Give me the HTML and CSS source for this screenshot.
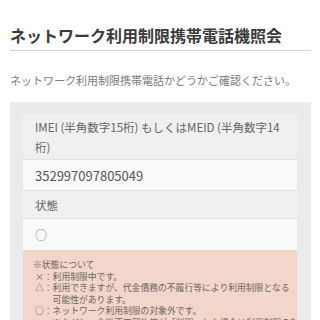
FILE: index.html
```html
<!DOCTYPE html>
<html lang="ja">
<head>
<meta charset="utf-8">
<link rel="stylesheet" href="styles.css">
</head>
<body>
<h1 class="title">ネットワーク利用制限携帯電話機照会</h1>
<p class="lead">ネットワーク利用制限携帯電話かどうかご確認ください。</p>
<div class="panel">
  <div class="card">
    <div class="row label">IMEI (半角数字15桁) もしくはMEID (半角数字14桁)</div>
    <div class="row value num">352997097805049</div>
    <div class="row label short">状態</div>
    <div class="row value status"><span class="mark">○</span></div>
    <div class="note">
      <div class="note-head">※状態について</div>
      <div class="note-item"><span class="key">×：</span><span>利用制限中です。</span></div>
      <div class="note-item"><span class="key">△：</span><span>利用できますが、代金債務の不履行等により利用制限となる<br>可能性があります。</span></div>
      <div class="note-item"><span class="key">○：</span><span>ネットワーク利用制限の対象外です。<br>※ただし、今後不正契約等が「判明」した場合は利用制限の対象と<br>なります。</span></div>
    </div>
  </div>
</div>
</body>
</html>
```
FILE: styles.css
```css
html, body {
  margin: 0;
  background: #ffffff;
}
body {
  padding: 0 9px 0 10px;
  font-family: "Noto Sans CJK JP", "Noto Sans", sans-serif;
  color: #555;
}
.title {
  margin: 23px 0 0;
  padding-bottom: 3px;
  font-size: 16px;
  line-height: 24px;
  font-weight: 700;
  color: #3a3a3a;
  border-bottom: 1px solid #d4d4d4;
}
.lead {
  margin: 21px 0 0;
  font-size: 11px;
  line-height: 16px;
  color: #7a7a7a;
}
.panel {
  margin-top: 14px;
  background: #ebebeb;
  padding: 12px 14px 0 13px;
}
.card {
  display: flex;
  flex-direction: column;
}
.row {
  padding: 0 12px;
  border-bottom: 1px solid #e3e3e3;
}
.label {
  background: #f0f0f0;
  font-size: 11.5px;
  line-height: 20px;
  padding-top: 3px;
  padding-bottom: 2px;
  color: #666;
}
.label.short {
  padding-top: 4px;
  padding-bottom: 3px;
}
.value {
  background: #f9f9f9;
  display: flex;
  align-items: center;
}
.num {
  height: 30px;
  font-size: 13px;
  color: #555;
}
.status {
  height: 31px;
  border-bottom: none;
}
.mark {
  font-size: 12px;
  color: #8a8a8a;
}
.note {
  background: #f2d6cb;
  padding: 9px 3px 10px 10px;
  font-size: 8.8px;
  line-height: 11.5px;
  color: #6e6460;
  white-space: nowrap;
  overflow: hidden;
}
.note-item {
  display: flex;
  padding-left: 2px;
}
.key {
  flex: none;
}
```
